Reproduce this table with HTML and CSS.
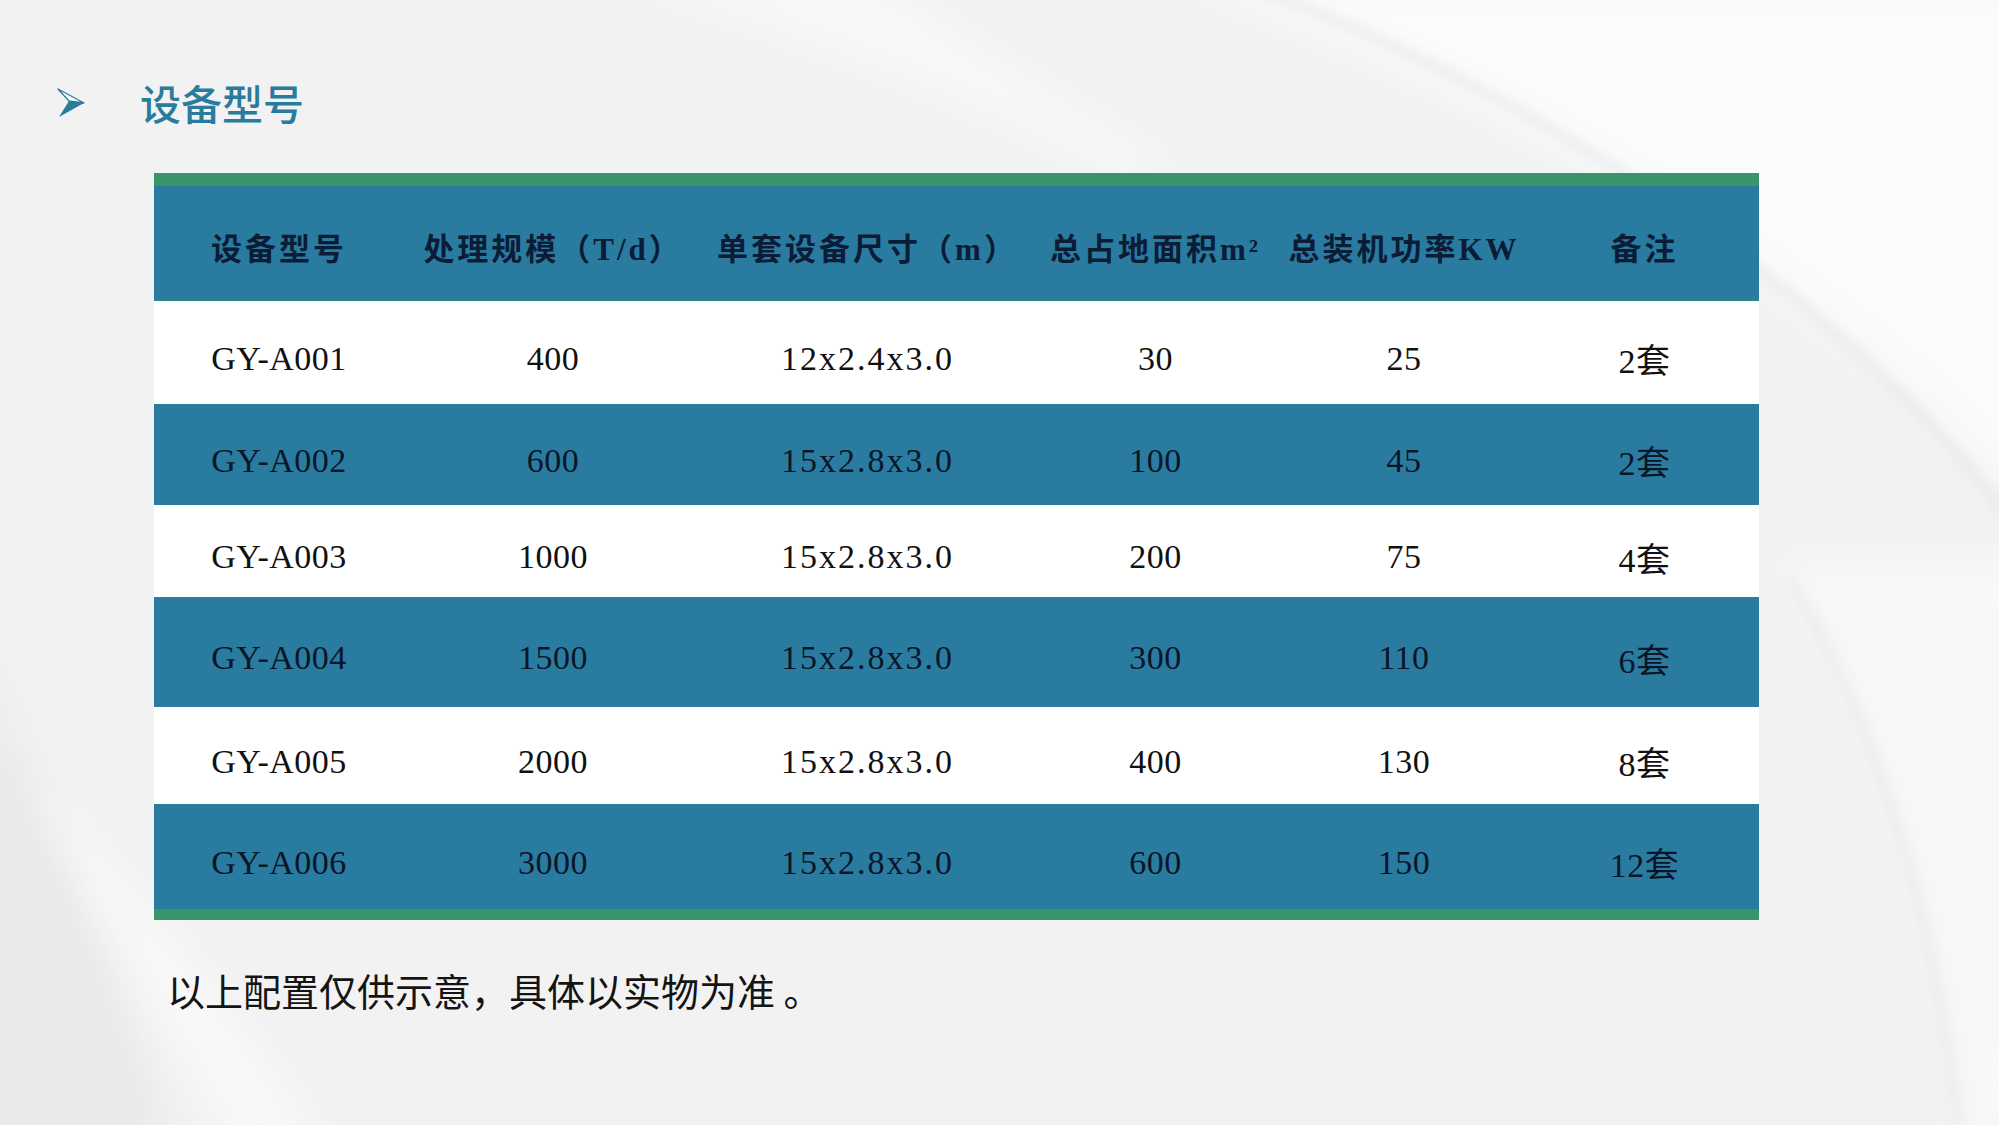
FILE: index.html
```html
<!DOCTYPE html>
<html lang="zh-CN">
<head>
<meta charset="utf-8">
<title>设备型号</title>
<link rel="stylesheet" href="styles.css">
</head>
<body>
<div class="slide">
  <svg class="bg" width="1999" height="1125" viewBox="0 0 1999 1125" aria-hidden="true">
    <defs>
      <filter id="soft" x="-20%" y="-20%" width="140%" height="140%">
        <feGaussianBlur stdDeviation="18"/>
      </filter>
      <filter id="edge" x="-20%" y="-20%" width="140%" height="140%">
        <feGaussianBlur stdDeviation="6"/>
      </filter>
    </defs>
    <path d="M1180,-20 C1520,90 1850,310 2040,520 L2040,-20 Z" fill="#ffffff" opacity="0.7" filter="url(#soft)"/>
    <path d="M1260,-10 C1580,110 1860,320 2010,520" fill="none" stroke="#e3e3e5" stroke-width="10" opacity="0.55" filter="url(#edge)"/>
    <path d="M1780,560 C1880,720 1940,920 1965,1140 L2040,1140 L2040,560 Z" fill="#ffffff" opacity="0.5" filter="url(#soft)"/>
    <path d="M1790,580 C1885,740 1935,930 1958,1130" fill="none" stroke="#e5e5e7" stroke-width="10" opacity="0.5" filter="url(#edge)"/>
    <path d="M-40,620 C40,780 110,960 170,1140 L-40,1140 Z" fill="#e7e7e9" opacity="0.8" filter="url(#soft)"/>
    <path d="M-20,700 C70,850 150,1000 230,1140 L320,1140 C220,990 100,840 -20,730 Z" fill="#ffffff" opacity="0.5" filter="url(#soft)"/>
    <path d="M620,-20 L880,-20 C980,50 1080,110 1180,170 L1110,175 C1000,110 820,40 620,-20 Z" fill="#ffffff" opacity="0.45" filter="url(#soft)"/>
  </svg>

  <div class="title">
    <svg class="arrow" width="28" height="30" viewBox="0 0 28 30" aria-hidden="true">
      <path d="M1,1 L27,15 L12,13 Z" fill="#ffffff" stroke="#2b7c9c" stroke-width="1.3" stroke-linejoin="round"/>
      <path d="M12,13 L27,15 L2,29 Z" fill="#2b7c9c"/>
    </svg>
    <h1>设备型号</h1>
  </div>

  <table class="spec">
    <colgroup>
      <col class="c1"><col class="c2"><col class="c3"><col class="c4"><col class="c5"><col class="c6">
    </colgroup>
    <thead>
      <tr>
        <th>设备型号</th>
        <th>处理规模（T/d）</th>
        <th>单套设备尺寸（m）</th>
        <th>总占地面积m²</th>
        <th>总装机功率KW</th>
        <th>备注</th>
      </tr>
    </thead>
    <tbody>
      <tr><td>GY-A001</td><td>400</td><td class="dim">12x2.4x3.0</td><td>30</td><td>25</td><td>2套</td></tr>
      <tr><td>GY-A002</td><td>600</td><td class="dim">15x2.8x3.0</td><td>100</td><td>45</td><td>2套</td></tr>
      <tr><td>GY-A003</td><td>1000</td><td class="dim">15x2.8x3.0</td><td>200</td><td>75</td><td>4套</td></tr>
      <tr><td>GY-A004</td><td>1500</td><td class="dim">15x2.8x3.0</td><td>300</td><td>110</td><td>6套</td></tr>
      <tr><td>GY-A005</td><td>2000</td><td class="dim">15x2.8x3.0</td><td>400</td><td>130</td><td>8套</td></tr>
      <tr><td>GY-A006</td><td>3000</td><td class="dim">15x2.8x3.0</td><td>600</td><td>150</td><td>12套</td></tr>
    </tbody>
  </table>

  <p class="note">以上配置仅供示意，具体以实物为准 。</p>
</div>
</body>
</html>
```

FILE: styles.css
```css
html, body {
  margin: 0;
  padding: 0;
}

body {
  background: #f3f3f4;
  font-family: "Noto Sans CJK SC", "Noto Sans", sans-serif;
}

.slide {
  position: relative;
  width: 1999px;
  height: 1125px;
  overflow: hidden;
  background: #f2f2f3;
}

.bg {
  position: absolute;
  left: 0;
  top: 0;
  z-index: 0;
}

.title,
.spec,
.note {
  position: relative;
  z-index: 1;
}

.title {
  display: flex;
  align-items: center;
  gap: 55px;
  padding: 82px 0 0 57px;
  height: 41px;
}

.arrow {
  display: block;
  flex: none;
}

.title h1 {
  margin: 0;
  font-size: 41px;
  line-height: 41px;
  font-weight: 500;
  color: #2a7c9c;
  letter-spacing: 0;
}

.spec {
  margin: 50px 0 0 154px;
  width: 1605px;
  table-layout: fixed;
  border-collapse: separate;
  border-spacing: 0;
  border-top: 13px solid #38966a;
  border-bottom: 11px solid #38966a;
  font-family: "Liberation Serif", "Noto Sans CJK SC", serif;
}

.c1 { width: 250px; }
.c2 { width: 298px; }
.c3 { width: 331px; }
.c4 { width: 245px; }
.c5 { width: 252px; }
.c6 { width: 229px; }

.spec th {
  height: 104px;
  padding: 8px 0 0 0;
  background: #2a7ba0;
  border-bottom: 3px solid #2a8190;
  color: #0b1c36;
  font-size: 31px;
  font-weight: 700;
  letter-spacing: 3px;
  text-align: center;
  vertical-align: middle;
  white-space: nowrap;
}

.spec td {
  padding: 12px 0 0 0;
  text-align: center;
  vertical-align: middle;
  font-size: 34px;
  color: #111111;
  letter-spacing: 0.5px;
  white-space: nowrap;
}

.spec td.dim {
  letter-spacing: 2px;
}

.spec tbody tr:nth-child(odd) td {
  background: #ffffff;
}

.spec tbody tr:nth-child(even) td {
  background: #2a7ba0;
  color: #0a1628;
}

.spec tbody tr:nth-child(1) td { height: 91px; }
.spec tbody tr:nth-child(2) td { height: 89px; }
.spec tbody tr:nth-child(3) td { height: 80px; }
.spec tbody tr:nth-child(4) td { height: 98px; }
.spec tbody tr:nth-child(5) td { height: 85px; }
.spec tbody tr:nth-child(6) td { height: 93px; }

.note {
  margin: 50px 0 0 167px;
  font-size: 38px;
  line-height: 40px;
  color: #141414;
  font-weight: 400;
}
```
